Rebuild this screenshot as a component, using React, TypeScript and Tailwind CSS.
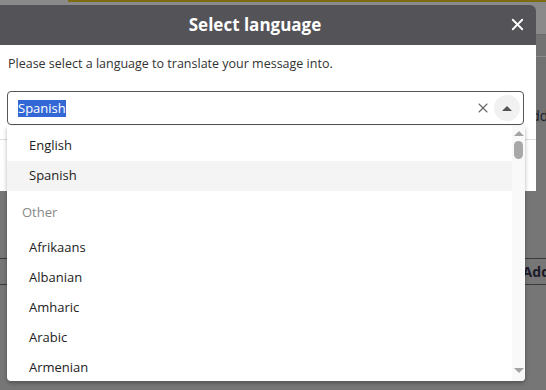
import { X } from "lucide-react";

const popular = ["English", "Spanish"];
const others = ["Afrikaans", "Albanian", "Amharic", "Arabic", "Armenian"];

function Scrollbar() {
  return (
    <div className="w-[13px] bg-[#f9f9f9] flex flex-col items-center">
      <div className="mt-[5px] w-0 h-0 border-l-[5px] border-r-[5px] border-b-[5px] border-l-transparent border-r-transparent border-b-[#a3a3a3]" />
      <div className="mt-[5px] w-[9px] h-[18px] rounded-full bg-[#a8a8a8]" />
      <div className="flex-1" />
      <div className="mb-[8px] w-0 h-0 border-l-[5px] border-r-[5px] border-t-[5px] border-l-transparent border-r-transparent border-t-[#a3a3a3]" />
    </div>
  );
}

export default function App() {
  return (
    <div
      className="relative w-[546px] h-[390px] overflow-hidden bg-[#767676]"
      style={{ fontFamily: '"Open Sans", "Noto Sans", sans-serif' }}
    >
      {/* page behind the overlay */}
      <div className="flex flex-col">
        <div className="h-[35px] bg-[#8a8a8a] border-b border-[#6a6a6a] flex">
          <div className="w-[68px]" />
          <div className="flex-1 h-[2px] bg-[#7d6c12]" />
        </div>
        <div className="h-[22px] border-b border-[#8a8a8a] bg-[#727272]" />
        <div className="h-[66px] flex justify-end items-end bg-[#727272]">
          <span className="text-[14px] text-[#1b1b2a] leading-none translate-x-[8px]">Addr</span>
        </div>
        <div className="h-[135px] bg-[#767676]" />
        <div className="h-[27px] border-y border-[#3a3a3a] flex justify-end items-center">
          <span className="text-[14px] font-bold text-[#1b1b2a] translate-x-[4px]">Add</span>
        </div>
      </div>

      {/* dialog */}
      <div className="absolute left-0 top-[5px] w-[536px] rounded-tr-[6px]">
        <div className="relative h-[40px] bg-[#545358] rounded-tr-[6px] flex items-center justify-center pr-[26px]">
          <h2 className="text-white text-[17px] font-bold">Select language</h2>
          <button className="absolute right-[9px] top-[10px] text-white">
            <X size={19} strokeWidth={2.3} />
          </button>
        </div>
        <div className="bg-white px-[7px] pt-[10px] h-[146px]">
          <p className="pl-[1px] text-[12.5px] leading-[17px] text-[#333]">
            Please select a language to translate your message into.
          </p>
          <div className="mt-[19px] h-[34px] w-[517px] border border-[#555] rounded-[4px] flex items-center pl-[10px] pr-[3px]">
            <span className="bg-[#3367d6] text-white text-[13px] leading-[17px]">Spanish</span>
            <div className="flex-1" />
            <X size={16} strokeWidth={1.6} className="text-[#666] mr-[3px]" />
            <div className="w-[26px] h-[26px] rounded-full bg-[#f1f1f1] flex items-center justify-center">
              <div className="w-0 h-0 border-l-[5px] border-r-[5px] border-b-[5px] border-l-transparent border-r-transparent border-b-[#555]" />
            </div>
          </div>
          <div className="mt-[14px] -mx-[7px] border-t border-[#dedede]" />
        </div>

        {/* dropdown */}
        <div className="absolute left-[7px] top-[121px] w-[518px] h-[255px] bg-white rounded-b-[4px] shadow-[0_2px_4px_rgba(0,0,0,0.3)] flex overflow-hidden">
          <div className="flex-1 pt-[5px] text-[13px] text-[#222]">
            {popular.map((l) => (
              <div
                key={l}
                className={`h-[30px] flex items-center pl-[22px] ${l === "Spanish" ? "bg-[#f4f4f4]" : ""}`}
              >
                {l}
              </div>
            ))}
            <div className="pt-[7px] pb-[5px]">
              <div className="h-[30px] flex items-center pl-[15px] text-[#888]">Other</div>
            </div>
            {others.map((l) => (
              <div key={l} className="h-[30px] flex items-center pl-[22px]">
                {l}
              </div>
            ))}
          </div>
          <Scrollbar />
        </div>
      </div>
    </div>
  );
}
